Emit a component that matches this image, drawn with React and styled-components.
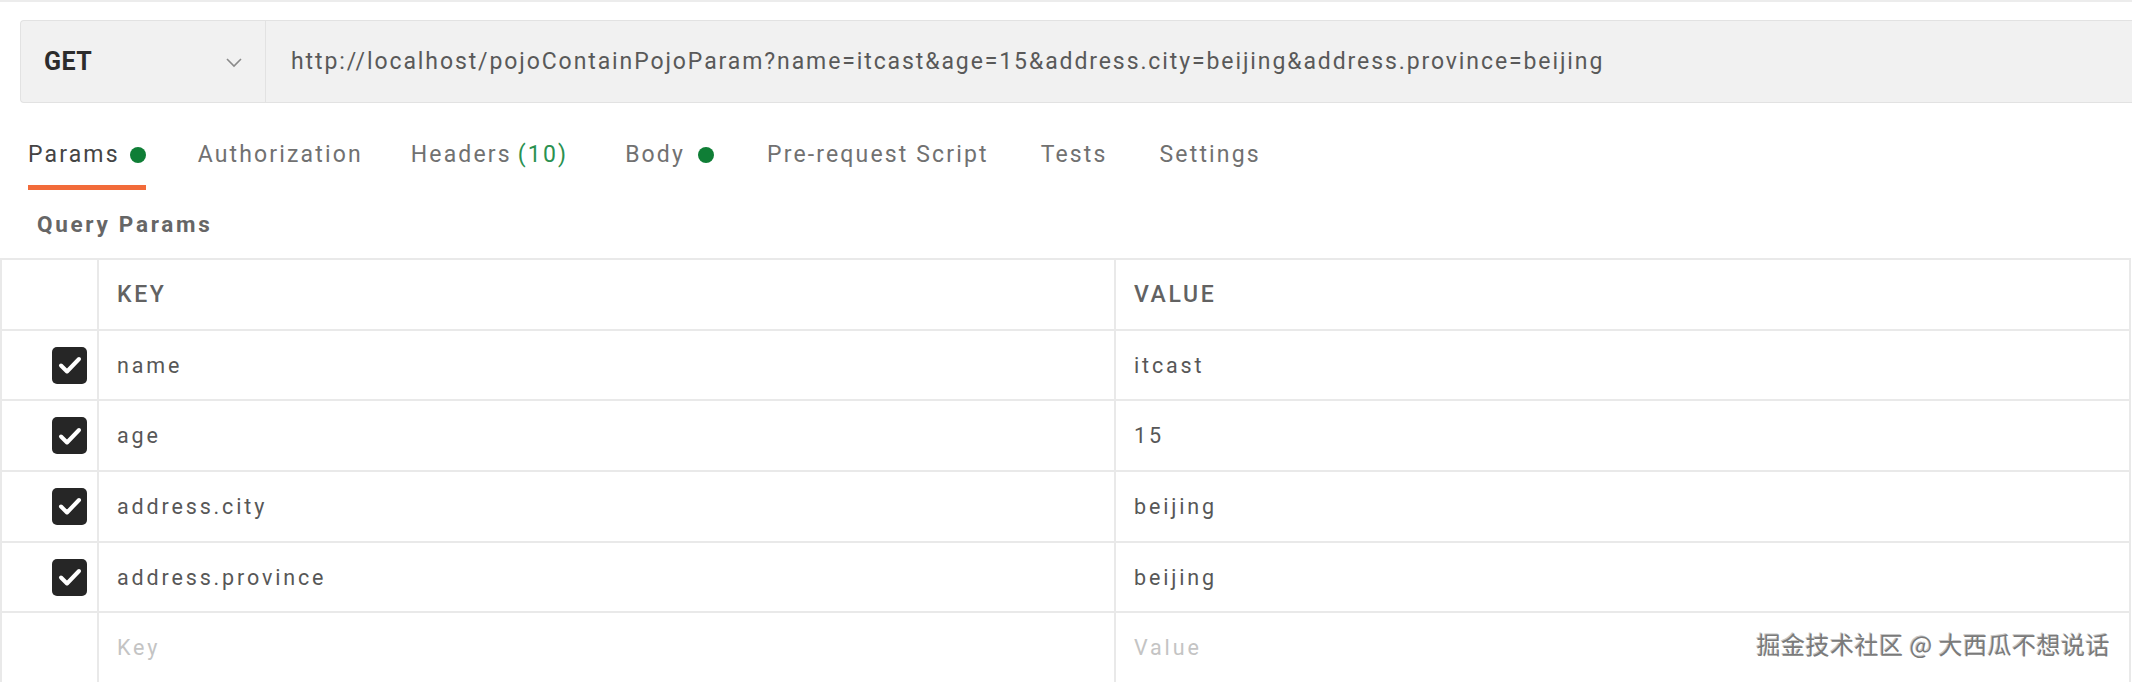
import React from "react";
import styled, { createGlobalStyle } from "styled-components";

const Global = createGlobalStyle`
  html, body { margin: 0; padding: 0; background: #ffffff; }
  body { font-family: Roboto, "Noto Sans", Arial, sans-serif; overflow: hidden; }
`;

const Page = styled.div`
  width: 2132px;
  height: 682px;
  overflow: hidden;
  position: relative;
  border-top: 2px solid #ececec;
  box-sizing: border-box;
  background: #fff;
`;

const UrlBar = styled.div`
  margin: 18px 0 0 20px;
  height: 83px;
  display: flex;
  background: #f1f1f1;
  border: 1px solid #e2e2e2;
  border-right: none;
  border-radius: 4px 0 0 4px;
  box-sizing: border-box;
`;

const MethodSelect = styled.div`
  width: 245px;
  flex: none;
  display: flex;
  align-items: center;
  justify-content: space-between;
  padding: 0 22px 0 23px;
  box-sizing: border-box;
  border-right: 1px solid #e2e2e2;
  font-size: 25px;
  font-weight: 700;
  color: #2c2c2c;
  letter-spacing: 0.4px;
`;

const UrlText = styled.div`
  display: flex;
  align-items: center;
  padding-left: 25px;
  font-size: 23px;
  letter-spacing: 1.9px;
  color: #595959;
  white-space: nowrap;
`;

const Tabs = styled.div`
  display: flex;
  padding-left: 28px;
  margin-top: 17px;
  height: 70px;
`;

const Tab = styled.div`
  display: flex;
  align-items: center;
  height: 100%;
  box-sizing: border-box;
  padding-top: 4px;
  margin-right: ${(p) => p.$gap}px;
  font-size: 23px;
  letter-spacing: 2.15px;
  color: ${(p) => (p.$active ? "#444" : "#717171")};
  border-bottom: 5px solid ${(p) => (p.$active ? "#f26b3a" : "transparent")};
  white-space: nowrap;
`;

const Count = styled.span`
  color: #2a9150;
  margin-left: 6px;
`;

const Dot = styled.span`
  width: 16px;
  height: 16px;
  border-radius: 50%;
  background: #0f7e36;
  margin-left: ${(p) => p.$ml ?? 10}px;
`;

const SectionTitle = styled.div`
  height: 68px;
  display: flex;
  align-items: center;
  padding-left: 37px;
  font-size: 22.5px;
  font-weight: 700;
  letter-spacing: 2.7px;
  color: #666;
  box-sizing: border-box;
`;

const Table = styled.div`
  border-top: 2px solid #e9e9e9;
  border-left: 2px solid #e9e9e9;
  border-right: 2px solid #e9e9e9;
  margin-right: 1px;
`;

const Row = styled.div`
  display: grid;
  grid-template-columns: 95px 1017px 1fr;
  height: 70.7px;
  box-sizing: border-box;
  border-bottom: 2px solid #e9e9e9;
`;

const Cell = styled.div`
  display: flex;
  align-items: center;
  padding-left: 18px;
  border-left: 2px solid #e9e9e9;
  font-size: ${(p) => (p.$head ? 23 : 21.5)}px;
  letter-spacing: ${(p) => (p.$head ? 2.6 : 2.85)}px;
  font-weight: ${(p) => (p.$head ? 500 : 400)};
  color: ${(p) => (p.$placeholder ? "#c4c4c4" : p.$head ? "#626262" : "#575757")};
  text-transform: ${(p) => (p.$head ? "uppercase" : "none")};
  white-space: nowrap;
`;

const CheckCell = styled.div`
  display: flex;
  align-items: center;
  justify-content: flex-end;
  padding-right: 10px;
`;

const Box = styled.div`
  width: 35px;
  height: 37px;
  border-radius: 5px;
  background: #262626;
  display: flex;
  align-items: center;
  justify-content: center;
`;

const Watermark = styled.div`
  position: absolute;
  right: 22px;
  bottom: 21px;
  font-family: "Noto Sans CJK SC", "Noto Sans", sans-serif;
  font-size: 24px;
  color: #7a7a7a;
  text-shadow: 1px 1px 0 #ffffff, -1px -1px 0 #c8c8c8;
  white-space: nowrap;
  letter-spacing: 0.5px;
`;

const Chevron = () => (
  <svg width="18" height="12" viewBox="0 0 18 12" fill="none">
    <path d="M2 3l7 7 7-7" stroke="#8a8a8a" strokeWidth="1.6" />
  </svg>
);

const Check = () => (
  <svg width="24" height="20" viewBox="0 0 24 20" fill="none">
    <path d="M3 10.5l6 6L21 4" stroke="#fff" strokeWidth="4" strokeLinecap="round" strokeLinejoin="round" />
  </svg>
);

const params = [
  ["name", "itcast"],
  ["age", "15"],
  ["address.city", "beijing"],
  ["address.province", "beijing"],
];

export default function App() {
  return (
    <>
      <Global />
      <Page>
        <UrlBar>
          <MethodSelect>
            <span>GET</span>
            <Chevron />
          </MethodSelect>
          <UrlText>
            http://localhost/pojoContainPojoParam?name=itcast&amp;age=15&amp;address.city=beijing&amp;address.province=beijing
          </UrlText>
        </UrlBar>
        <Tabs>
          <Tab $active $gap={52}>
            Params<Dot />
          </Tab>
          <Tab $gap={48}>Authorization</Tab>
          <Tab $gap={57}>
            Headers<Count>(10)</Count>
          </Tab>
          <Tab $gap={53}>
            Body<Dot $ml={13} />
          </Tab>
          <Tab $gap={52}>Pre-request Script</Tab>
          <Tab $gap={52}>Tests</Tab>
          <Tab $gap={52}>Settings</Tab>
        </Tabs>
        <SectionTitle>Query Params</SectionTitle>
        <Table>
          <Row>
            <CheckCell />
            <Cell $head>Key</Cell>
            <Cell $head>Value</Cell>
          </Row>
          {params.map(([k, v]) => (
            <Row key={k}>
              <CheckCell>
                <Box>
                  <Check />
                </Box>
              </CheckCell>
              <Cell>{k}</Cell>
              <Cell>{v}</Cell>
            </Row>
          ))}
          <Row>
            <CheckCell />
            <Cell $placeholder>Key</Cell>
            <Cell $placeholder>Value</Cell>
          </Row>
        </Table>
        <Watermark>掘金技术社区 @ 大西瓜不想说话</Watermark>
      </Page>
    </>
  );
}
